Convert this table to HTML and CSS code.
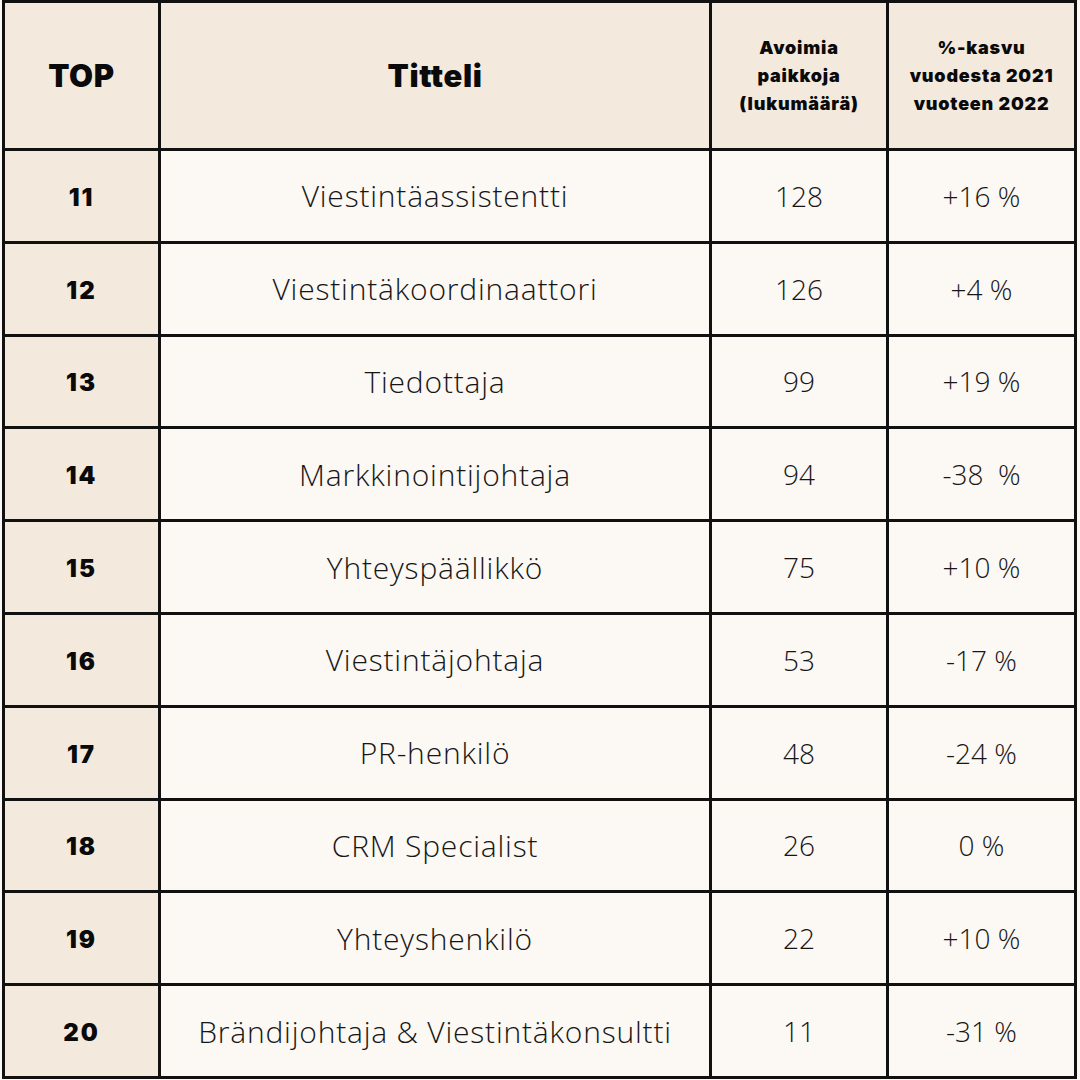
FILE: index.html
```html
<!DOCTYPE html>
<html lang="fi">
<head>
<meta charset="utf-8">
<link rel="stylesheet" href="styles.css">
</head>
<body>
<div class="table">
  <div class="cell head rank">TOP</div>
  <div class="cell head title">Titteli</div>
  <div class="cell head small">Avoimia<br>paikkoja<br>(lukumäärä)</div>
  <div class="cell head small">%-kasvu<br>vuodesta 2021<br>vuoteen 2022</div>

  <div class="cell rank num">11</div><div class="cell body name">Viestintäassistentti</div><div class="cell body">128</div><div class="cell body">+16 %</div>
  <div class="cell rank num">12</div><div class="cell body name">Viestintäkoordinaattori</div><div class="cell body">126</div><div class="cell body">+4 %</div>
  <div class="cell rank num">13</div><div class="cell body name">Tiedottaja</div><div class="cell body">99</div><div class="cell body">+19 %</div>
  <div class="cell rank num">14</div><div class="cell body name">Markkinointijohtaja</div><div class="cell body">94</div><div class="cell body">-38&nbsp; %</div>
  <div class="cell rank num">15</div><div class="cell body name">Yhteyspäällikkö</div><div class="cell body">75</div><div class="cell body">+10 %</div>
  <div class="cell rank num">16</div><div class="cell body name">Viestintäjohtaja</div><div class="cell body">53</div><div class="cell body">-17 %</div>
  <div class="cell rank num">17</div><div class="cell body name">PR-henkilö</div><div class="cell body">48</div><div class="cell body">-24 %</div>
  <div class="cell rank num">18</div><div class="cell body name">CRM Specialist</div><div class="cell body">26</div><div class="cell body">0 %</div>
  <div class="cell rank num">19</div><div class="cell body name">Yhteyshenkilö</div><div class="cell body">22</div><div class="cell body">+10 %</div>
  <div class="cell rank num">20</div><div class="cell body name">Brändijohtaja &amp; Viestintäkonsultti</div><div class="cell body">11</div><div class="cell body">-31 %</div>
</div>
</body>
</html>
```

FILE: styles.css
```css
html, body {
  margin: 0;
  padding: 0;
  background: #fcf8f4;
}
body {
  padding-left: 2px;
  font-family: "Open Sans", "Liberation Sans", sans-serif;
  color: #111;
}
.table {
  width: 1075px;
  height: 1079px;
  box-sizing: border-box;
  padding: 3px;
  background: #111;
  display: grid;
  grid-template-columns: 153px 548px 174px 185px;
  grid-template-rows: 145px repeat(10, 1fr);
  gap: 3px;
}
.cell {
  display: flex;
  align-items: center;
  justify-content: center;
  text-align: center;
}
.head {
  background: #f3e9dd;
  font-family: "Inter", "Liberation Sans", sans-serif;
  font-weight: 900;
  color: #0a0a0a;
}
.head.rank, .head.title {
  font-size: 31px;
  letter-spacing: 0.6px;
}
.head.small {
  font-size: 18px;
  line-height: 28px;
  letter-spacing: 0.8px;
}
.rank {
  background: #f3e9dd;
  font-family: "Inter", "Liberation Sans", sans-serif;
  font-weight: 900;
  color: #0a0a0a;
}
.num {
  font-size: 24px;
  letter-spacing: 2px;
  padding-top: 3px;
}
.body {
  background: #fcf8f4;
  font-weight: 300;
  font-size: 28px;
  color: #161616;
}
.body.name {
  font-size: 30px;
  letter-spacing: 0.8px;
}
```
